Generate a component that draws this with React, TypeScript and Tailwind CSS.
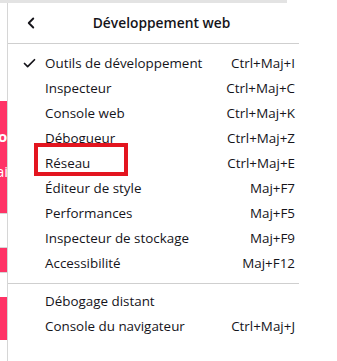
import { ChevronLeft, Check } from 'lucide-react';

type Item = { label: string; shortcut?: string; checked?: boolean };

const devItems: Item[] = [
  { label: 'Outils de développement', shortcut: 'Ctrl+Maj+I', checked: true },
  { label: 'Inspecteur', shortcut: 'Ctrl+Maj+C' },
  { label: 'Console web', shortcut: 'Ctrl+Maj+K' },
  { label: 'Débogueur', shortcut: 'Ctrl+Maj+Z' },
  { label: 'Réseau', shortcut: 'Ctrl+Maj+E' },
  { label: 'Éditeur de style', shortcut: 'Maj+F7' },
  { label: 'Performances', shortcut: 'Maj+F5' },
  { label: 'Inspecteur de stockage', shortcut: 'Maj+F9' },
  { label: 'Accessibilité', shortcut: 'Maj+F12' },
];

const otherItems: Item[] = [
  { label: 'Débogage distant' },
  { label: 'Console du navigateur', shortcut: 'Ctrl+Maj+J' },
];

function MenuRow({ item }: { item: Item }) {
  return (
    <div className="flex items-center h-[25px] pl-[14px] pr-[4px]">
      <span className="w-[23px] flex items-center">
        {item.checked && <Check className="w-[15px] h-[15px]" strokeWidth={2.75} aria-hidden="true" />}
      </span>
      <span className="flex-1">{item.label}</span>
      {item.shortcut && <span>{item.shortcut}</span>}
    </div>
  );
}

export default function App() {
  return (
    <div
      className="relative w-[337px] h-[361px] bg-white overflow-hidden text-[13.4px] text-[#15141a]"
      style={{ fontFamily: '"Open Sans", sans-serif' }}
    >
      <div className="h-[3px] w-[287px] bg-[#e3e3e3]" />
      <div className="flex">
        {/* page behind the menu */}
        <div className="w-[8px] flex flex-col border-r border-[#d6d6d6]">
          <div className="h-[98px]" />
          <div className="h-[112px] bg-[#ff3366] text-white text-[15px] leading-none overflow-hidden flex flex-col">
            <span className="mt-[28px] -ml-[2px] font-bold">o</span>
            <span className="mt-[20px] -ml-[4px]">ai</span>
          </div>
          <div className="h-[35px] border-t border-b border-[#d6d6d6]" />
          <div className="h-[24px] bg-[#ff3366]" />
          <div className="h-[25px] border-t border-[#d6d6d6]" />
          <div className="h-[43px] bg-[#ff3366]" />
        </div>

        {/* menu panel */}
        <div className="w-[291px] h-[358px] bg-white flex flex-col font-medium">
          <div className="h-[40px] flex items-center relative">
            <ChevronLeft className="absolute left-[14px] w-[18px] h-[18px]" strokeWidth={2.5} aria-hidden="true" />
            <span className="flex-1 text-center font-semibold text-[13.8px] pl-[16px]">Développement web</span>
          </div>
          <div className="h-px bg-[#cfcfcf]" />
          <div className="pt-[7px] pb-[7px]">
            {devItems.map((it) => (
              <MenuRow key={it.label} item={it} />
            ))}
          </div>
          <div className="h-px bg-[#cfcfcf]" />
          <div className="pt-[5px]">
            {otherItems.map((it) => (
              <MenuRow key={it.label} item={it} />
            ))}
          </div>
        </div>
      </div>

      {/* highlight box */}
      <div className="absolute left-[34px] top-[143px] w-[94px] h-[33px] border-[4px] border-[#e3151f]" />
    </div>
  );
}
